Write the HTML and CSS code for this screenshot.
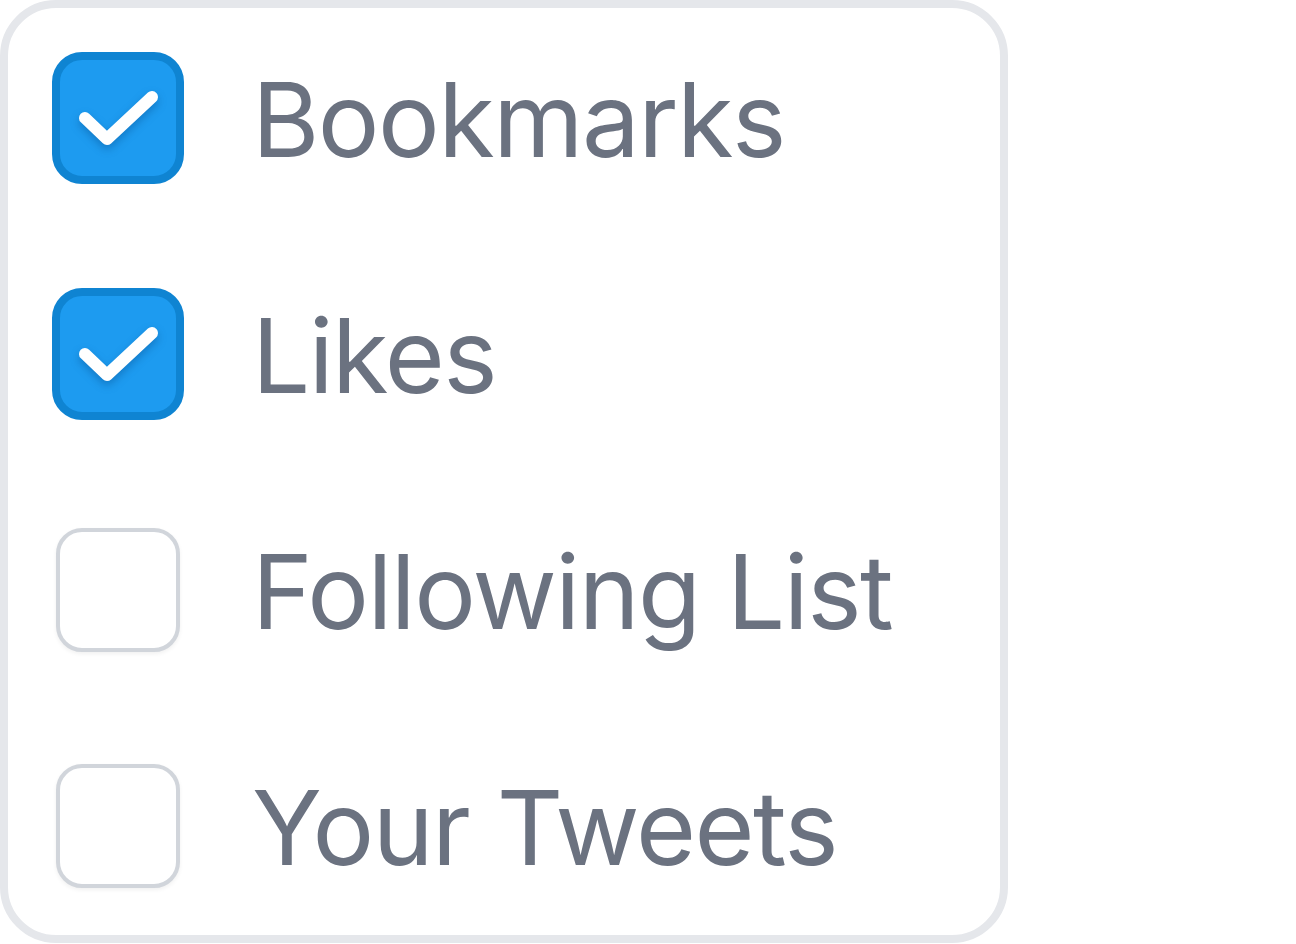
FILE: index.html
```html
<!DOCTYPE html>
<html lang="en">
<head>
    <meta charset="UTF-8">
    <meta name="viewport" content="width=device-width, initial-scale=1.0">
    <title>Export options</title>
    <link rel="stylesheet" href="styles.css">
</head>
<body>
    <div class="card">
        <label class="option">
            <span class="box-wrap"><span class="box checked">
                <svg viewBox="0 0 116 116" class="tick"><path d="M25 58 L47 79 L92 37"/></svg>
            </span></span>
            <span class="label">Bookmarks</span>
        </label>
        <label class="option">
            <span class="box-wrap"><span class="box checked">
                <svg viewBox="0 0 116 116" class="tick"><path d="M25 58 L47 79 L92 37"/></svg>
            </span></span>
            <span class="label">Likes</span>
        </label>
        <label class="option">
            <span class="box-wrap"><span class="box"></span></span>
            <span class="label">Following List</span>
        </label>
        <label class="option">
            <span class="box-wrap"><span class="box"></span></span>
            <span class="label">Your Tweets</span>
        </label>
    </div>
</body>
</html>
```

FILE: styles.css
```css
body {
    margin: 0;
    padding: 0;
    background: #ffffff;
    font-family: 'Inter', 'Liberation Sans', sans-serif;
}
.card {
    width: 1008px;
    height: 943px;
    box-sizing: border-box;
    border: 8px solid #e5e7eb;
    border-radius: 56px;
    padding: 44px 44px;
    display: flex;
    flex-direction: column;
    gap: 104px;
}
.option {
    display: flex;
    align-items: center;
    gap: 68px;
    height: 132px;
}
.box-wrap {
    width: 132px;
    height: 132px;
    display: flex;
    align-items: center;
    justify-content: center;
    flex-shrink: 0;
}
.box {
    width: 124px;
    height: 124px;
    box-sizing: border-box;
    border: 4px solid #d1d5db;
    border-radius: 26px;
    background: #ffffff;
    box-shadow: 0 2px 4px rgba(0,0,0,0.06);
    display: flex;
    align-items: center;
    justify-content: center;
}
.box.checked {
    width: 132px;
    height: 132px;
    border: 8px solid #0f84d2;
    border-radius: 30px;
    background: #1d9bf0;
    box-shadow: none;
}
.tick {
    width: 116px;
    height: 116px;
    filter: drop-shadow(0 4px 4px rgba(0, 60, 120, 0.35));
}
.tick path {
    fill: none;
    stroke: #ffffff;
    stroke-width: 12;
    stroke-linecap: round;
    stroke-linejoin: round;
}
.label {
    font-size: 103px;
    line-height: 132px;
    padding-top: 3px;
    color: #6b7280;
    letter-spacing: -0.015em;
}
```
